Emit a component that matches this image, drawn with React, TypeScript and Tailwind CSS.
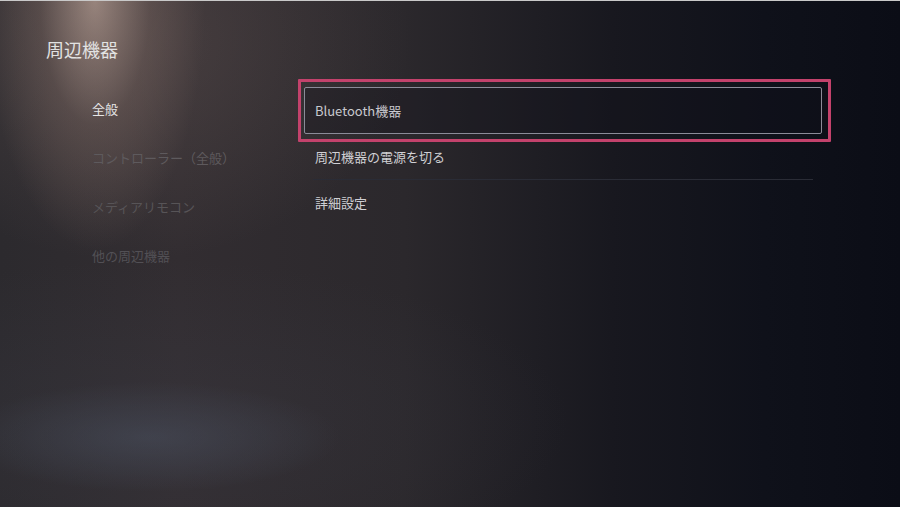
import React from "react";

const font = { fontFamily: '"Noto Sans CJK JP", "Noto Sans", sans-serif' };

export default function App() {
  return (
    <div
      className="relative w-[900px] h-[507px] overflow-hidden bg-[#10121b]"
      style={font}
    >
      {/* background layers */}
      <div className="absolute inset-0 bg-[linear-gradient(90deg,#2c2a2e_0%,#322d31_20%,#2b282c_45%,#18181f_68%,#0f111a_85%,#0b0d16_100%)]" />
      <div className="absolute inset-0 bg-[radial-gradient(ellipse_110px_250px_at_95px_0px,rgba(195,170,158,0.8),rgba(140,116,108,0.35)_50%,transparent_100%)]" />
      <div className="absolute inset-0 bg-[radial-gradient(ellipse_280px_220px_at_130px_40px,rgba(115,98,94,0.35),transparent_100%)]" />
      <div className="absolute inset-0 bg-[radial-gradient(ellipse_190px_55px_at_150px_437px,rgba(82,92,110,0.5),transparent_100%)]" />
      <div className="absolute inset-0 bg-[radial-gradient(ellipse_420px_160px_at_150px_420px,rgba(60,60,70,0.35),transparent_100%)]" />
      <div className="absolute left-0 top-0 w-full h-[1px] bg-[#c9c9c9]" />

      <div className="relative flex flex-col">
        <div className="pl-[46px] pt-[37px] h-[80px] text-[18px] leading-[24px] text-[#e2e2e2]">
          周辺機器
        </div>
        <div className="flex">
          {/* left menu */}
          <div className="w-[304px] pl-[92px] pt-[19px] flex flex-col gap-[29px] text-[13px] leading-[20px]">
            <div className="text-[#e6e6e6]">全般</div>
            <div className="text-[#5e5a5d]">コントローラー（全般）</div>
            <div className="text-[#575457]">メディアリモコン</div>
            <div className="text-[#525055]">他の周辺機器</div>
          </div>
          {/* right list */}
          <div className="w-[518px] pt-[7px] flex flex-col text-[13px] leading-[20px]">
            <div className="relative">
              <div className="absolute left-[-6px] top-[-8px] w-[533px] h-[63px] border-[3px] border-[#c3426c] rounded-[1px]" />
              <div className="h-[47px] border border-[#8b8b98] rounded-[2px] pl-[10px] flex items-center text-[#c8c8ce] bg-[#0f111a]/30">
                Bluetooth機器
              </div>
            </div>
            <div className="h-[46px] pl-[11px] pr-[9px] flex flex-col">
              <div className="flex-1 flex items-center text-[#d0d0d4]">
                周辺機器の電源を切る
              </div>
              <div className="h-[1px] bg-[#2a2c36] ml-[-2px]" />
            </div>
            <div className="h-[45px] pl-[11px] flex items-center text-[#d0d0d4]">
              詳細設定
            </div>
          </div>
        </div>
      </div>
    </div>
  );
}
